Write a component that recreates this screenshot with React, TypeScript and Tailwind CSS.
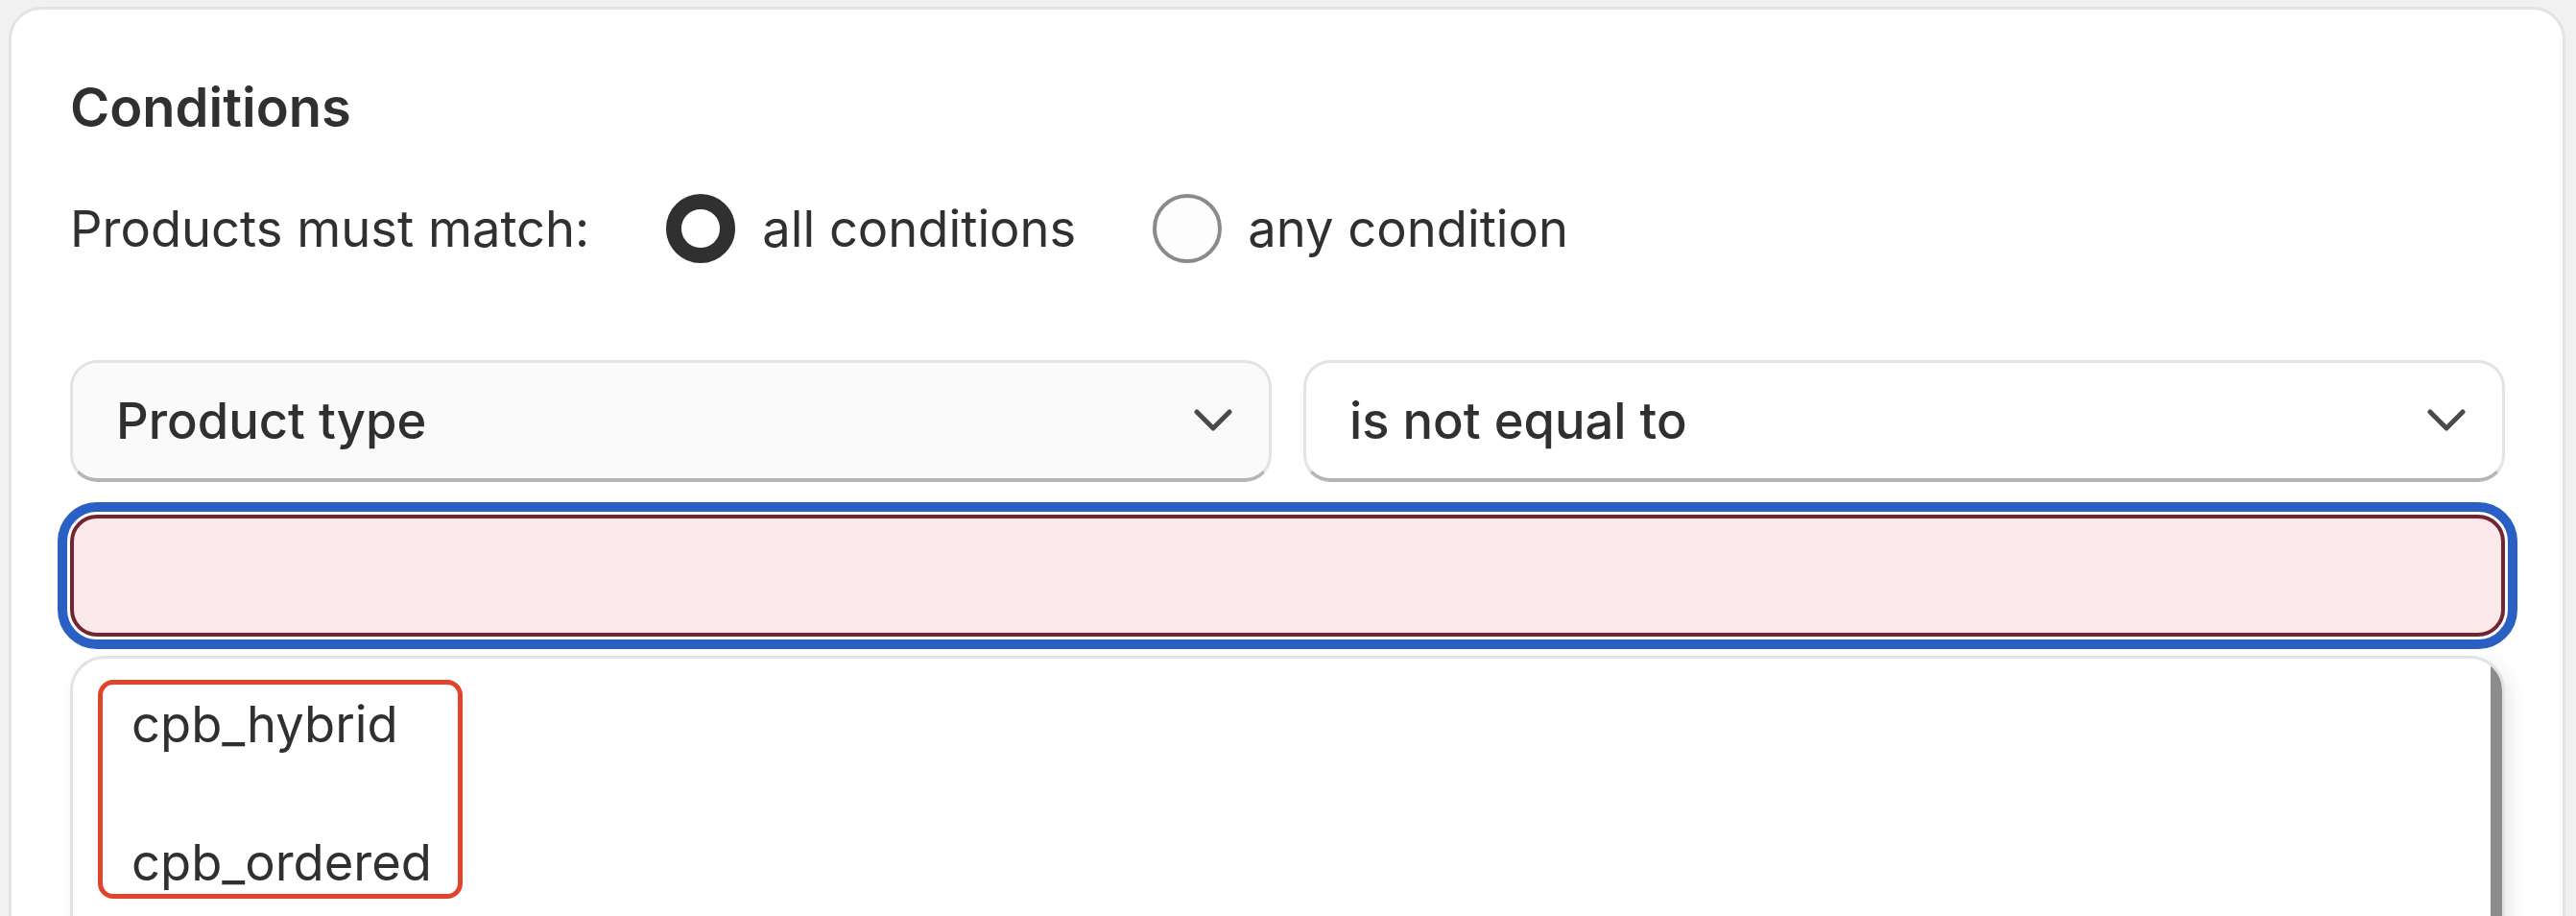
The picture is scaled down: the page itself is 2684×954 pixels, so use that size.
import React from "react";

function Chevron() {
  return (
    <svg width="40" height="24" viewBox="0 0 40 24" fill="none" className="shrink-0">
      <path d="M3 3 L20 20 L37 3" stroke="#4a4a4a" strokeWidth="5" strokeLinecap="round" strokeLinejoin="round" />
    </svg>
  );
}

export default function App() {
  return (
    <div
      className="h-[954px] w-full overflow-hidden bg-[#f1f1f1] text-[#303030]"
      style={{ fontFamily: "Inter, 'Noto Sans', 'Liberation Sans', sans-serif" }}
    >
      <div className="ml-[9px] mr-[11px] mt-[7px] rounded-[34px] border-[3px] border-[#e3e3e3] bg-white pl-[61px] pr-[60px] pt-[68px] pb-[120px]">
        <h2 className="text-[56px] font-semibold leading-[68px]">Conditions</h2>

        <div className="mt-[56px] flex h-[72px] items-center text-[52.5px] leading-[72px]">
          <span>Products must match:</span>
          <div className="ml-[80px] flex items-center">
            <span className="box-border h-[72px] w-[72px] rounded-full border-[16px] border-[#303030] bg-white" />
            <span className="ml-[28px]">all conditions</span>
          </div>
          <div className="ml-[80px] flex items-center">
            <span className="box-border h-[72px] w-[72px] rounded-full border-[4px] border-[#8a8a8a] bg-[#fdfdfd]" />
            <span className="ml-[27px]">any condition</span>
          </div>
        </div>

        <div className="mt-[101px] grid grid-cols-2 gap-[33px]">
          <div className="flex h-[127px] items-center justify-between rounded-[28px] border-[3px] border-[#e3e3e3] border-b-[4px] border-b-[#b5b5b5] bg-[#fafafa] pl-[45px] pr-[38px]">
            <span className="text-[52.5px] font-medium leading-[60px]">Product type</span>
            <Chevron />
          </div>
          <div className="flex h-[127px] items-center justify-between rounded-[28px] border-[3px] border-[#e3e3e3] border-b-[4px] border-b-[#b5b5b5] bg-white pl-[45px] pr-[38px]">
            <span className="text-[52.5px] font-medium leading-[60px]">is not equal to</span>
            <Chevron />
          </div>
        </div>

        <div className="mt-[34px] h-[127px] rounded-[28px] border-[4px] border-[#722630] bg-[#fae8ea] outline-[10px] outline-solid outline-offset-[3px] outline-[#2a5fc4]" />

        <div className="mt-[20px] flex h-[400px] overflow-hidden rounded-[36px] border-[3px] border-[#e3e3e3] bg-white shadow-[6px_6px_18px_rgba(0,0,0,0.08)]">
          <div className="flex-1 pl-[26px] pt-[22px]">
            <div className="flex w-[380px] flex-col gap-[84px] rounded-[16px] border-[5px] border-[#e0452c] pl-[30px] pt-[11px] pb-[3px] text-[52.5px] leading-[60px]">
              <span>cpb_hybrid</span>
              <span>cpb_ordered</span>
            </div>
          </div>
          <div className="w-[12px] shrink-0 bg-[#8c8c8c]" />
        </div>
      </div>
    </div>
  );
}
